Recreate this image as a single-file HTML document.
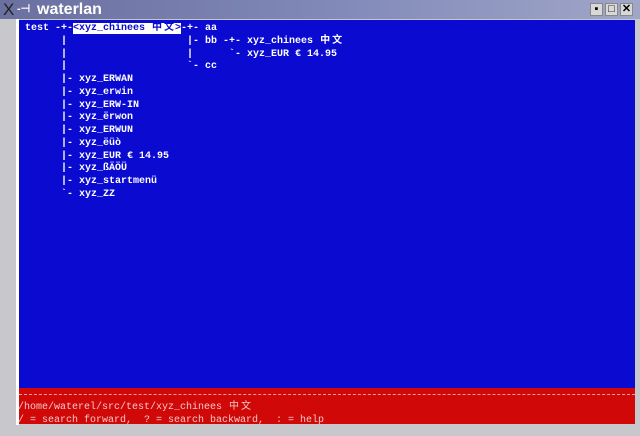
<!DOCTYPE html>
<html><head><style>
body{margin:0;width:640px;height:436px;background:#c8c8cc;position:relative;overflow:hidden;font-family:"Liberation Mono","Noto Sans CJK SC",monospace}
.title{position:absolute;left:0;top:0;width:640px;height:19px;background:linear-gradient(90deg,#6a70a0,#8088b8 50%,#a0a6c8);}
.title .t{position:absolute;left:37px;top:0;color:#fff;font:bold 16px "Liberation Sans",sans-serif;line-height:19px}
.title .x{position:absolute;left:3px;top:0;color:#222;font:17px "Liberation Sans",sans-serif;line-height:19px}
.title .s{position:absolute;left:17px;top:0;color:#fff;font:bold 11px "Liberation Sans",sans-serif;line-height:18px}
.btn{position:absolute;top:3px;width:13px;height:13px;background:#d8d8d8;border:1px solid #888;box-sizing:border-box;font:bold 11px "Liberation Sans",sans-serif;text-align:center;line-height:11px;color:#000}
.lf{position:absolute;left:16px;top:19px;width:3px;height:406px;background:#fff}
.blue{position:absolute;left:19px;top:20px;width:616px;height:368px;background:#0a0ad0}
.red{position:absolute;left:19px;top:388px;width:616px;height:36px;background:#d00808}
pre{margin:0;font:bold 10px "Liberation Mono","Noto Sans CJK SC",monospace;color:#fff;line-height:12.75px}
.c{display:inline-block;width:12px;text-align:center}
.hl{background:#fff;color:#0a0ad0}
.tree{position:absolute;left:25px;top:23px}
.bt{position:absolute;left:18px;top:401px;color:#f4c8c8;font:10px "Liberation Mono","Noto Sans CJK SC",monospace;line-height:13px;white-space:pre}
.dash{position:absolute;left:19px;top:394px;width:616px;border-top:1px dashed #f0a0a0}
</style></head><body>
<div class="title"><span class="x">X</span><span class="s">-⊣</span><span class="t">waterlan</span>
<div class="btn" style="left:590px">▪</div><div class="btn" style="left:605px">□</div><div class="btn" style="left:620px">✕</div></div>
<div class="lf"></div>
<div class="blue"></div>
<div class="red"></div>
<div class="dash"></div>
<pre class="tree">test -+-<span class="hl">&lt;xyz_chinees <span class="c">中</span><span class="c">文</span>&gt;</span>-+- aa
      |                    |- bb -+- xyz_chinees <span class="c">中</span><span class="c">文</span>
      |                    |      `- xyz_EUR € 14.95
      |                    `- cc
      |- xyz_ERWAN
      |- xyz_erwin
      |- xyz_ERW-IN
      |- xyz_ërwon
      |- xyz_ERWUN
      |- xyz_ëüò
      |- xyz_EUR € 14.95
      |- xyz_ßÄÖÜ
      |- xyz_startmenü
      `- xyz_ZZ</pre>
<div class="bt">/home/waterel/src/test/xyz_chinees <span class="c">中</span><span class="c">文</span>
/ = search forward,  ? = search backward,  : = help</div>
</body></html>
